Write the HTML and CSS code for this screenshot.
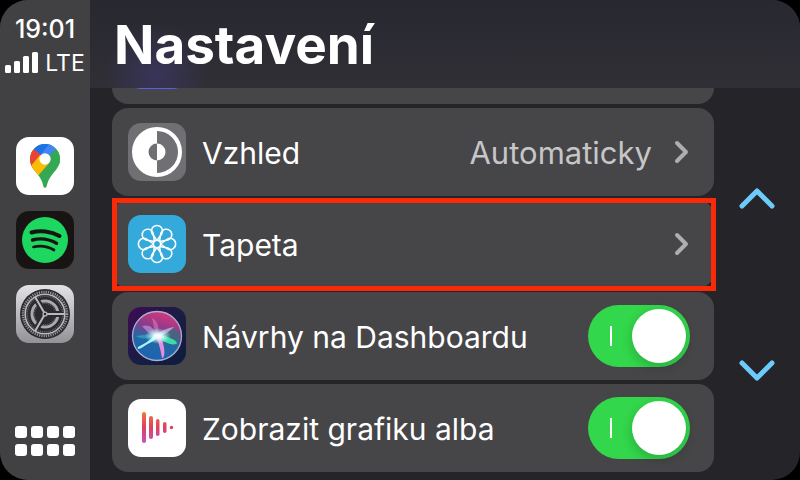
FILE: index.html
```
<!DOCTYPE html>
<html lang="cs">
  <head>
    <meta charset="UTF-8" />
    <meta name="viewport" content="width=device-width, initial-scale=1.0" />
    <title>Nastavení</title>
    <link rel="stylesheet" href="styles.css">
  </head>
  <body>
    <div class="screen">
      <aside class="sidebar">
        <div class="status">
          <div class="clock">19:01</div>
          <div class="network">
            <svg class="signal" viewBox="0 0 34 22" aria-hidden="true">
              <rect x="0" y="13" width="6" height="8" rx="1.5" />
              <rect x="9" y="9" width="6" height="12" rx="1.5" />
              <rect x="18" y="4" width="6" height="17" rx="1.5" />
              <rect x="27" y="0" width="6" height="21" rx="1.5" />
            </svg>
            <span>LTE</span>
          </div>
        </div>

        <nav class="dock">
          <!-- maps -->
          <a class="app" href="#maps" aria-label="Mapy">
            <svg viewBox="0 0 58 58">
              <defs>
                <clipPath id="pin">
                  <path d="M29 7a15 15 0 0 1 15 15c0 6-3 10-7 14.500c-3 3.500-5 7-6 11.500c-.7 3.800-3.300 3.800-4 0c-1-4.500-3-8-6-11.500c-4-4.500-7-8.500-7-14.500a15 15 0 0 1 15-15z" />
                </clipPath>
              </defs>
              <rect width="58" height="58" fill="#fff" />
              <g clip-path="url(#pin)">
                <rect width="58" height="58" fill="#34a853" />
                <path d="M10 8L17 11L29 20L14 37L5 30z" fill="#ea4335" />
                <path d="M14 30L24 18L34 25L21 40L16 38z" fill="#fbbc04" />
                <path d="M14 9L25 18L29 22L38 4L20 2z" fill="#1a73e8" />
                <path d="M34 6L25 17L31 21L41 11z" fill="#4285f4" />
                <path d="M44 8L31 23L33 26L50 30z" fill="#34a853" />
              </g>
              <circle cx="29" cy="22" r="5.700" fill="#fff" />
            </svg>
          </a>
          <!-- spotify -->
          <a class="app" href="#spotify" aria-label="Spotify">
            <svg viewBox="0 0 58 58" fill="none" stroke="#191414" stroke-linecap="round">
              <rect width="58" height="58" fill="#191414" stroke="none" />
              <circle cx="29" cy="29" r="23" fill="#1ed760" stroke="none" />
              <path d="M15.500 21.500C24 19 35 20 43.500 25" stroke-width="4" />
              <path d="M16.500 29C24 27 33 28 40.500 32.300" stroke-width="3.400" />
              <path d="M17.500 36C24 34.500 31 35 38 39" stroke-width="2.700" />
            </svg>
          </a>
          <!-- settings -->
          <a class="app" href="#settings" aria-label="Nastavení">
            <svg viewBox="0 0 58 58" fill="none">
              <defs>
                <linearGradient id="metal" x1="0" y1="0" x2="0" y2="1">
                  <stop offset="0" stop-color="#e2e2e7" />
                  <stop offset="1" stop-color="#929297" />
                </linearGradient>
              </defs>
              <rect width="58" height="58" fill="url(#metal)" />
              <circle cx="29" cy="29" r="25" fill="#2b2b2e" />
              <circle cx="29" cy="29" r="22" stroke="#98989d" stroke-width="2.500" stroke-dasharray="1.200 1.104" />
              <circle cx="29" cy="29" r="19.800" stroke="#b9b9be" stroke-width="1.600" />
              <circle cx="29" cy="29" r="17.800" stroke="#66666a" stroke-width="1.600" stroke-dasharray="1 1" />
              <circle cx="29" cy="29" r="13" stroke="#aaaaaf" stroke-width="3" />
              <circle cx="29" cy="29" r="10.800" stroke="#66666a" stroke-width="1.400" stroke-dasharray="1 1" />
              <g stroke="#2b2b2e" stroke-width="6">
                <path d="M29 29L46 29M29 29L20.500 14.300M29 29L20.500 43.700" />
              </g>
              <g stroke="#b9b9be" stroke-width="2">
                <path d="M29 29L49 29M29 29L19 11.700M29 29L19 46.300" />
              </g>
              <circle cx="29" cy="29" r="2.600" fill="#b9b9be" />
              <circle cx="29" cy="29" r="1.300" fill="#2b2b2e" />
            </svg>
          </a>
        </nav>

        <button class="dashboard" aria-label="Dashboard">
          <i></i><i></i><i></i><i></i>
          <i></i><i></i><i></i><i></i>
        </button>
      </aside>

      <main class="main">
        <header class="header">
          <h1>Nastavení</h1>
        </header>

        <div class="content">
          <div class="list">
            <div class="row">
              <span class="icon icon-purple"></span>
            </div>

            <a class="row" href="#appearance">
              <svg class="icon" viewBox="0 0 58 58">
                <rect width="58" height="58" fill="#707074" />
                <circle cx="29" cy="29" r="23" fill="none" stroke="#fff" stroke-width="4" />
                <path d="M29 5A24 24 0 0 0 29 53z" fill="#fff" />
                <path d="M29 20.500A8.500 8.500 0 0 0 29 37.500z" fill="#707074" />
                <path d="M29 20.500A8.500 8.500 0 0 1 29 37.500z" fill="#fff" />
              </svg>
              <span class="label">Vzhled</span>
              <span class="value">Automaticky</span>
              <svg class="chevron" viewBox="0 0 16 24"><path d="M3 3L12 12L3 21" /></svg>
            </a>

            <a class="row row-marked" href="#wallpaper">
              <svg class="icon" viewBox="0 0 58 58">
                <defs>
                  <path id="petal" d="M29 25.500L24 18.500A5.600 5.600 0 1 1 34 18.500z" />
                </defs>
                <rect width="58" height="58" fill="#34aadc" />
                <g fill="none" stroke="#fff" stroke-width="1.500" stroke-linejoin="round">
                  <use href="#petal" />
                  <use href="#petal" transform="rotate(45 29 29)" />
                  <use href="#petal" transform="rotate(90 29 29)" />
                  <use href="#petal" transform="rotate(135 29 29)" />
                  <use href="#petal" transform="rotate(180 29 29)" />
                  <use href="#petal" transform="rotate(225 29 29)" />
                  <use href="#petal" transform="rotate(270 29 29)" />
                  <use href="#petal" transform="rotate(315 29 29)" />
                  <circle cx="29" cy="29" r="3.700" />
                </g>
              </svg>
              <span class="label">Tapeta</span>
              <svg class="chevron" viewBox="0 0 16 24"><path d="M3 3L12 12L3 21" /></svg>
            </a>

            <div class="row">
              <svg class="icon" viewBox="0 0 58 58">
                <defs>
                  <linearGradient id="siriBg" x1="0" y1="0" x2="1" y2="1">
                    <stop offset="0" stop-color="#3f0a56" />
                    <stop offset=".5" stop-color="#1b1c45" />
                    <stop offset="1" stop-color="#0d1c3c" />
                  </linearGradient>
                  <linearGradient id="siriOrb" x1=".65" y1="0" x2=".35" y2="1">
                    <stop offset="0" stop-color="#d8367c" />
                    <stop offset=".35" stop-color="#8a3b8c" />
                    <stop offset=".6" stop-color="#2467a4" />
                    <stop offset="1" stop-color="#1b64b4" />
                  </linearGradient>
                  <radialGradient id="siriGlow">
                    <stop offset="0" stop-color="#fff" />
                    <stop offset=".35" stop-color="#eff" stop-opacity=".85" />
                    <stop offset="1" stop-color="#9ff" stop-opacity="0" />
                  </radialGradient>
                </defs>
                <rect width="58" height="58" fill="url(#siriBg)" />
                <circle cx="29" cy="29" r="24.500" fill="url(#siriOrb)" stroke="#a9b0cc" stroke-width="1.300" />
                <path d="M30 29C38 20 47 20 51 24C52 30 52 34 48 39z" fill="#257b78" opacity=".6" />
                <path d="M29 28C26 20 20 17 14 19C18 23 20 28 29 28z" fill="#c9a0dc" opacity=".6" />
                <path d="M30 28C32 20 29 13 24 11C26 17 25 24 30 28z" fill="#d77ab6" opacity=".6" />
                <path d="M29 28C23 26 14 28 8 29C15 33 23 32 29 28z" fill="#35b5c9" opacity=".6" />
                <path d="M29 27C34 28 48 32 49 36C46 40 35 35 29 30z" fill="#3ddba6" />
                <path d="M27 27C23 33 16 37 10 40C9 43 12 42 15 40C22 35 29 33 31 29z" fill="#a5f5ff" />
                <path d="M27 29C32 37 33 46 34 51C38 51 37 38 32 28z" fill="#e88cdc" />
                <path d="M28 29C32 24 39 21 46 20C41 25 34 30 28 29z" fill="#e9d4ef" opacity=".6" />
                <ellipse cx="30" cy="29" rx="13" ry="8" fill="url(#siriGlow)" />
              </svg>
              <label class="label" for="suggestions">Návrhy na Dashboardu</label>
              <input class="switch" type="checkbox" id="suggestions" checked>
            </div>

            <div class="row">
              <svg class="icon" viewBox="0 0 58 58">
                <defs>
                  <linearGradient id="bars" gradientUnits="userSpaceOnUse" x1="0" y1="13" x2="0" y2="44">
                    <stop offset="0" stop-color="#f0763c" />
                    <stop offset=".5" stop-color="#e0405f" />
                    <stop offset="1" stop-color="#c54fc4" />
                  </linearGradient>
                </defs>
                <rect width="58" height="58" fill="#fff" />
                <g fill="url(#bars)">
                  <rect x="14" y="13" width="4" height="31" rx="2" />
                  <rect x="21" y="17" width="4" height="23" rx="2" />
                  <rect x="28" y="20" width="3.500" height="17" rx="1.700" />
                  <rect x="35" y="23" width="3.500" height="11" rx="1.700" />
                  <circle cx="43.500" cy="28.500" r="1.700" />
                </g>
              </svg>
              <label class="label" for="artwork">Zobrazit grafiku alba</label>
              <input class="switch" type="checkbox" id="artwork" checked>
            </div>
          </div>

          <div class="scroller">
            <button aria-label="Nahoru">
              <svg viewBox="0 0 36 22"><path d="M3 18L18 3L33 18" /></svg>
            </button>
            <button aria-label="Dolů">
              <svg viewBox="0 0 36 22"><path d="M3 3L18 18L33 3" /></svg>
            </button>
          </div>
        </div>
      </main>
    </div>
  </body>
</html>
```
FILE: styles.css
```
* {
  box-sizing: border-box;
}
body {
  margin: 0;
  background-color: #000;
  color: #fff;
  font-family: Inter, "Liberation Sans", sans-serif;
}
a {
  color: inherit;
  text-decoration: none;
}
button {
  padding: 0;
  border: none;
  background: none;
  cursor: pointer;
}
svg {
  display: block;
}
.screen {
  display: flex;
  height: 100vh;
  border-radius: 28px;
  overflow: hidden;
  background-color: #252429;
}

/* sidebar */
.sidebar {
  display: flex;
  flex-direction: column;
  align-items: center;
  width: 90px;
  padding: 14px 0 24px;
  background-color: #414143;
}
.status {
  height: 123px;
  font-size: 23px;
  line-height: 30px;
}
.clock {
  font-weight: 500;
  font-size: 25px;
  text-align: center;
}
.network {
  display: flex;
  align-items: center;
  gap: 6px;
  padding-top: 4px;
}
.signal {
  width: 34px;
  height: 22px;
  fill: #fff;
}
.dock {
  display: flex;
  flex-direction: column;
  gap: 16px;
}
.app svg,
.icon {
  width: 58px;
  height: 58px;
  border-radius: 13px;
}
.dashboard {
  display: grid;
  grid-template-columns: repeat(4, 12px);
  gap: 6px 4px;
  margin-top: auto;
}
.dashboard i {
  height: 12px;
  border-radius: 3px;
  background-color: #fff;
}

/* main */
.main {
  display: flex;
  flex: 1;
  flex-direction: column;
  min-width: 0;
}
.header {
  height: 88px;
  padding: 12px 24px;
  background: radial-gradient(circle at 66px 76px, #38355a 0, #38355a00 52px),
    linear-gradient(#282831, #302f35);
}
h1 {
  margin: 0;
  font-size: 53px;
  font-weight: 700;
  line-height: 66px;
}
.content {
  display: flex;
  flex: 1;
  min-height: 0;
}
.list {
  display: flex;
  flex: 1;
  flex-direction: column;
  justify-content: flex-end;
  gap: 4px;
  padding: 0 4px 8px 22px;
  overflow: hidden;
}
.row {
  display: flex;
  flex-shrink: 0;
  align-items: center;
  height: 88px;
  padding: 0 24px 0 16px;
  border-radius: 16px;
  background-color: #464548;
}
.row-marked {
  position: relative;
}
.row-marked::after {
  content: "";
  position: absolute;
  inset: -2px -2px -3px 0;
  border: 5px solid #fa2a08;
}
.icon-purple {
  background-color: #5e5ce6;
}
.label,
.value {
  padding-top: 2px;
  line-height: 40px;
  white-space: nowrap;
}
.label {
  flex: 1;
  padding-left: 16px;
  font-size: 30px;
}
.value {
  color: #c6c6c8;
  font-size: 31px;
}
.chevron {
  width: 16px;
  height: 24px;
  margin-left: 22px;
  fill: none;
  stroke: #aeaeb0;
  stroke-width: 4;
  stroke-linecap: round;
  stroke-linejoin: round;
}

/* toggle */
.switch {
  appearance: none;
  display: flex;
  align-items: center;
  justify-content: space-between;
  width: 102px;
  height: 62px;
  margin: 0;
  padding: 0 4px 0 22px;
  border-radius: 31px;
  background-color: #32d74b;
  cursor: pointer;
}
.switch::before {
  content: "";
  width: 2px;
  height: 20px;
  background-color: #fff;
}
.switch::after {
  content: "";
  width: 54px;
  height: 54px;
  border-radius: 50%;
  background-color: #fff;
  box-shadow: 0 4px 12px rgba(0, 0, 0, 0.2);
}
.scroller {
  display: flex;
  flex-direction: column;
  align-items: center;
  gap: 150px;
  width: 82px;
  padding: 100px 4px 0 0;
}
.scroller svg {
  width: 36px;
  height: 22px;
  fill: none;
  stroke: #6ccbfa;
  stroke-width: 5;
  stroke-linecap: round;
  stroke-linejoin: round;
}
```
